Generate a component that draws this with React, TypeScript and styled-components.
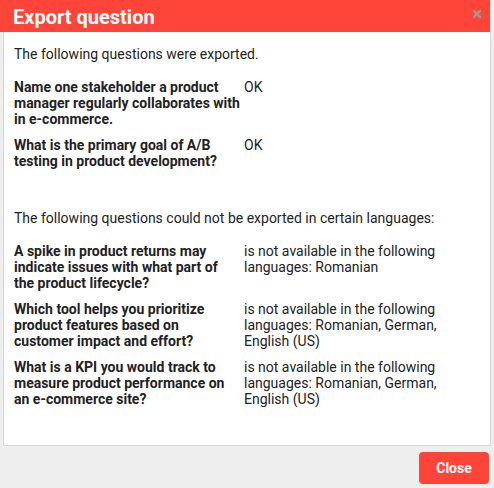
import React from "react";
import styled, { createGlobalStyle } from "styled-components";

const Global = createGlobalStyle`
  html, body { margin: 0; padding: 0; background: #eeeeee; }
  body { font-family: Roboto, "Liberation Sans", Arial, sans-serif; }
  * { box-sizing: border-box; }
`;

const Page = styled.div`
  width: 494px;
  height: 488px;
  display: flex;
  flex-direction: column;
`;

const Dialog = styled.div`
  margin-left: 3px;
  width: 488px;
  height: 446px;
  border: 1px solid #d6d6d6;
  background: #ffffff;
  display: flex;
  flex-direction: column;
`;

const Header = styled.div`
  margin: -1px 0 0 -4px;
  width: calc(100% + 4px);
  height: 32px;
  background: #ff4539;
  display: flex;
  align-items: center;
  justify-content: space-between;
  padding: 0 9px 0 13px;
`;

const Title = styled.h1`
  margin: 0;
  font-size: 20px;
  font-weight: 700;
  color: #ffffff;
  line-height: 24px;
  padding-top: 1px;
`;

const CloseX = styled.button`
  border: 0;
  background: none;
  padding: 0;
  width: 8px;
  height: 8px;
  display: flex;
  margin-top: -4px;
  cursor: pointer;
`;

const Body = styled.div`
  padding: 14px 10px 0 10px;
  color: #222222;
  font-size: 14px;
  line-height: 16px;
`;

const Intro = styled.p<{ $top?: number }>`
  margin: ${(p) => p.$top ?? 0}px 0 17px 0;
`;

const Rows = styled.div`
  display: flex;
  flex-direction: column;
  gap: 10px;
`;

const Row = styled.div`
  display: grid;
  grid-template-columns: 227px 1fr;
  column-gap: 3px;
`;

const Question = styled.div`
  font-weight: 700;
`;

const Status = styled.div`
  font-weight: 400;
  padding-right: 10px;
`;

const Footer = styled.div`
  display: flex;
  justify-content: flex-end;
  padding: 6px 5px 0 0;
`;

const CloseButton = styled.button`
  width: 70px;
  height: 32px;
  border: 0;
  border-radius: 4px;
  background: #ff4539;
  color: #ffffff;
  font-family: Roboto, "Liberation Sans", Arial, sans-serif;
  font-weight: 700;
  font-size: 14px;
  cursor: pointer;
`;

const exported = [
  "Name one stakeholder a product manager regularly collaborates with in e-commerce.",
  "What is the primary goal of A/B testing in product development?",
];

const failed = [
  {
    q: "A spike in product returns may indicate issues with what part of the product lifecycle?",
    langs: "Romanian",
  },
  {
    q: "Which tool helps you prioritize product features based on customer impact and effort?",
    langs: "Romanian, German, English (US)",
  },
  {
    q: "What is a KPI you would track to measure product performance on an e-commerce site?",
    langs: "Romanian, German, English (US)",
  },
];

export default function App() {
  return (
    <Page>
      <Global />
      <Dialog>
        <Header>
          <Title>Export question</Title>
          <CloseX aria-label="close">
            <svg width="8" height="8" viewBox="0 0 8 8">
              <path d="M1 1L7 7M7 1L1 7" stroke="#a39a98" strokeWidth="2.4" strokeLinecap="square" />
            </svg>
          </CloseX>
        </Header>
        <Body>
          <Intro>The following questions were exported.</Intro>
          <Rows>
            {exported.map((q) => (
              <Row key={q}>
                <Question>{q}</Question>
                <Status>OK</Status>
              </Row>
            ))}
          </Rows>
          <Intro $top={41}>The following questions could not be exported in certain languages:</Intro>
          <Rows>
            {failed.map((f) => (
              <Row key={f.q}>
                <Question>{f.q}</Question>
                <Status>is not available in the following languages: {f.langs}</Status>
              </Row>
            ))}
          </Rows>
        </Body>
      </Dialog>
      <Footer>
        <CloseButton>Close</CloseButton>
      </Footer>
    </Page>
  );
}
